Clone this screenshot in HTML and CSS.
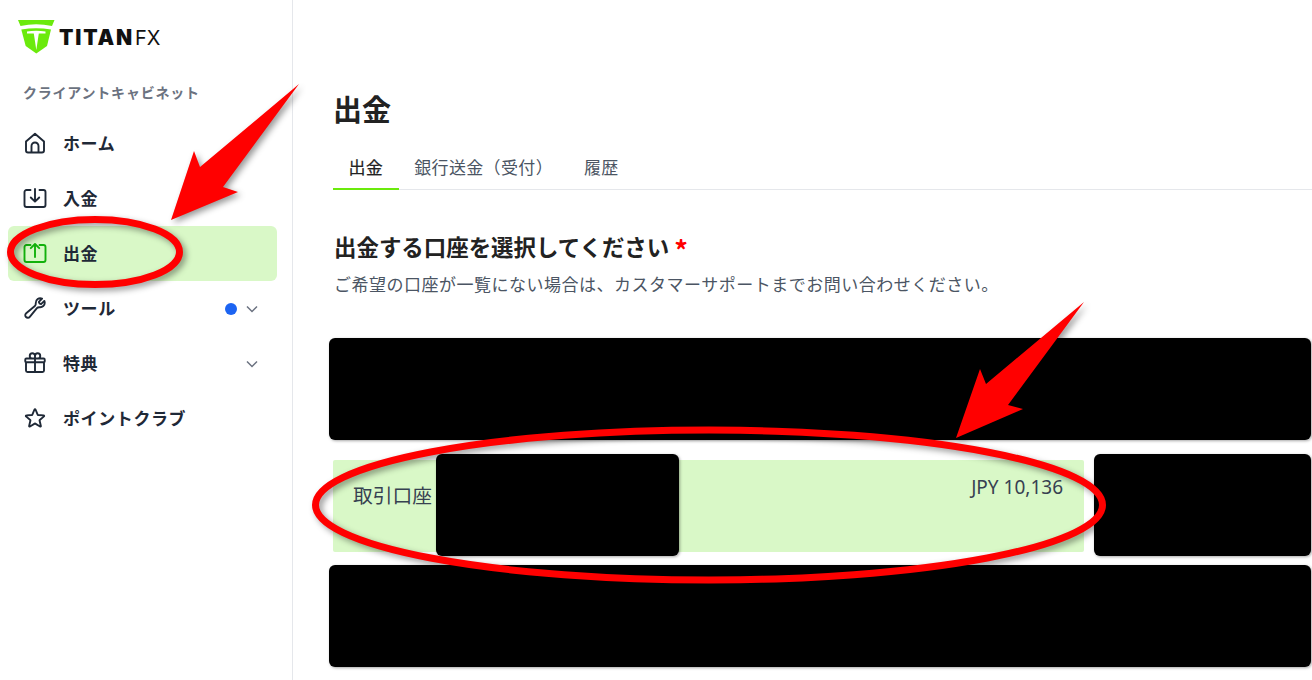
FILE: index.html
```html
<!DOCTYPE html>
<html lang="ja">
<head>
<meta charset="utf-8">
<title>出金</title>
<link rel="stylesheet" href="styles.css">
</head>
<body>
<div class="app">
  <aside class="sidebar">
    <div class="brand">
      <svg class="brand-mark" viewBox="0 0 37 34" width="37" height="34">
        <path d="M0 0H36.500L34 6Q18 2.500 2.500 6Z" fill="#6bea0c"/>
        <path d="M3.300 9.500Q18 6.800 33 9.500L29 26 18.300 33.500 7.700 26Z" fill="#6bea0c"/>
        <path d="M9 11.400Q18 10 27.500 11.400V13.600H20.800L18.300 30 15.800 13.600H9Z" fill="#fff"/>
      </svg>
      <span class="brand-name">TITAN</span><span class="brand-fx">FX</span>
    </div>
    <div class="side-heading">クライアントキャビネット</div>
    <nav class="nav">
      <a class="nav-item">
        <svg class="icon" viewBox="0 0 24 24"><path d="M3 10.500 12 2.800l9 7.700V19.500a2 2 0 0 1-2 2H5a2 2 0 0 1-2-2zM8.500 21.500V15a3.500 3.500 0 0 1 7 0v6.500"/></svg>
        <span class="nav-label">ホーム</span>
      </a>
      <a class="nav-item">
        <svg class="icon" viewBox="0 0 24 24"><path d="M7.500 4H3.500A2 2 0 0 0 1.500 6v13a2 2 0 0 0 2 2h17a2 2 0 0 0 2-2V6a2 2 0 0 0-2-2h-4M12 3v12.500M7.800 11.500l4.200 4.200 4.200-4.200"/></svg>
        <span class="nav-label">入金</span>
      </a>
      <a class="nav-item active">
        <svg class="icon" viewBox="0 0 24 24"><path d="M7.500 4H3.500A2 2 0 0 0 1.500 6v13a2 2 0 0 0 2 2h17a2 2 0 0 0 2-2V6a2 2 0 0 0-2-2h-4M12 16V3M7.800 7.200 12 3l4.200 4.200"/></svg>
        <span class="nav-label">出金</span>
      </a>
      <a class="nav-item">
        <svg class="icon" viewBox="0 0 24 24"><path d="M21.750 6.750a4.500 4.500 0 0 1-4.884 4.484c-1.076-.091-2.264.071-2.950.904l-7.152 8.684a2.548 2.548 0 1 1-3.586-3.586l8.684-7.152c.833-.686.995-1.874.904-2.950a4.500 4.500 0 0 1 6.336-4.486l-3.276 3.276a3.004 3.004 0 0 0 2.250 2.250l3.276-3.276c.287.626.402 1.313.402 2.052Z"/></svg>
        <span class="nav-label">ツール</span>
        <span class="dot"></span>
        <svg class="chevron" viewBox="0 0 12 8"><path d="M1 1.500 6 6.500 11 1.500"/></svg>
      </a>
      <a class="nav-item">
        <svg class="icon" viewBox="0 0 24 24"><path d="M21 11.250v8.250a1.500 1.500 0 0 1-1.500 1.500H4.500A1.500 1.500 0 0 1 3 19.500v-8.250M12 4.875A2.625 2.625 0 1 0 9.375 7.500H12m0-2.625V7.500m0-2.625A2.625 2.625 0 1 1 14.625 7.500H12m0 0V21m-8.625-9.750h17.250c.621 0 1.125-.504 1.125-1.125v-1.500c0-.621-.504-1.125-1.125-1.125H3.375c-.621 0-1.125.504-1.125 1.125v1.500c0 .621.504 1.125 1.125 1.125Z"/></svg>
        <span class="nav-label">特典</span>
        <svg class="chevron only" viewBox="0 0 12 8"><path d="M1 1.500 6 6.500 11 1.500"/></svg>
      </a>
      <a class="nav-item">
        <svg class="icon" viewBox="0 0 24 24"><path d="M11.480 3.499a.562.562 0 0 1 1.040 0l2.125 5.111a.563.563 0 0 0 .475.345l5.518.442c.499.040.701.663.321 1.003l-4.204 3.602a.563.563 0 0 0-.182.557l1.285 5.385a.562.562 0 0 1-.840.610l-4.725-2.885a.562.562 0 0 0-.586 0L6.982 20.540a.562.562 0 0 1-.840-.610l1.285-5.386a.562.562 0 0 0-.182-.557l-4.204-3.602a.563.563 0 0 1 .321-1.003l5.518-.442a.563.563 0 0 0 .475-.345L11.480 3.500Z"/></svg>
        <span class="nav-label">ポイントクラブ</span>
      </a>
    </nav>
  </aside>
  <main class="main">
    <h1 class="title">出金</h1>
    <div class="tabs">
      <a class="tab active">出金</a>
      <a class="tab">銀行送金（受付）</a>
      <a class="tab">履歴</a>
    </div>
    <h2 class="section-title">出金する口座を選択してください <span class="req">*</span></h2>
    <p class="section-note">ご希望の口座が一覧にない場合は、カスタマーサポートまでお問い合わせください。</p>
    <div class="accounts">
      <div class="redact wide"></div>
      <div class="account-line">
        <div class="account">
          <span class="account-type">取引口座</span>
          <div class="redact number"></div>
          <span class="balance">JPY 10,136</span>
        </div>
        <div class="redact side"></div>
      </div>
      <div class="redact wide"></div>
    </div>
  </main>
</div>
<svg class="annotations" viewBox="0 0 1312 680" width="1312" height="680">
  <g class="marks">
    <ellipse cx="95" cy="252" rx="84.500" ry="32.500"/>
    <ellipse cx="709" cy="505" rx="393.500" ry="75"/>
    <polygon class="arrow" points="299,84 223,187 238,192 171,220 194,151 200,167"/>
    <polygon class="arrow" points="1084,302 1008,405 1023,409 956,438 980,369 986,384"/>
  </g>
</svg>
</body>
</html>
```
FILE: styles.css
```css
* { box-sizing: border-box; }
html, body { margin: 0; height: 100%; overflow: hidden; background: #fff; }
body { font-family: "Noto Sans CJK JP", "Noto Sans", sans-serif; color: #1f2937; }

.app { display: flex; height: 680px; }

.sidebar {
  flex: 0 0 293px;
  border-right: 1px solid #e5e7eb;
  padding: 20px 15px 0 8px;
}
.brand { display: flex; align-items: center; height: 34px; padding-left: 10px; color: #111; }
.brand-mark { flex: none; margin-right: 4px; }
.brand-name { font-family: Inter, sans-serif; font-weight: 900; font-size: 21px; letter-spacing: 1.800px; padding-top: 1px; }
.brand-fx { font-family: Inter, sans-serif; font-weight: 400; font-size: 20px; margin-left: 1px; padding-top: 1px; }

.side-heading {
  margin: 27px 0 0 15px;
  height: 22px;
  line-height: 22px;
  font-size: 14px;
  font-weight: 700;
  letter-spacing: 0.78px;
  color: #6b7280;
}

.nav { display: flex; flex-direction: column; margin-top: 13px; }
.nav-item {
  display: flex;
  align-items: center;
  height: 55px;
  padding: 0 18px 0 15px;
  border-radius: 6px;
  font-size: 17px;
  font-weight: 700;
  letter-spacing: 0.600px;
}
.nav-label { margin-left: 16px; padding-bottom: 3px; }
.nav-item.active { background: #d9f8c7; }
.icon {
  flex: none;
  width: 24px;
  height: 24px;
  margin-bottom: 2px;
  fill: none;
  stroke: #1f2937;
  stroke-width: 1.9;
  stroke-linecap: round;
  stroke-linejoin: round;
}
.nav-item.active .icon { stroke: #12b10c; }
.dot { width: 12px; height: 12px; border-radius: 50%; background: #1c64f2; margin-left: auto; }
.chevron {
  flex: none;
  width: 12px;
  height: 8px;
  margin-left: 9px;
  margin-right: 1px;
  fill: none;
  stroke: #6b7280;
  stroke-width: 1.5;
}
.chevron.only { margin-left: auto; }

.main { flex: 1; min-width: 0; padding: 88px 1px 0 40px; }
.title { margin: 0; font-size: 29px; line-height: 40px; font-weight: 700; color: #222; }

.tabs { display: flex; margin: 20px -1px 0 0; border-bottom: 1px solid #e5e7eb; height: 42px; }
.tab {
  padding: 7px 15.500px 0;
  height: 42px;
  line-height: 24px;
  font-size: 17px;
  letter-spacing: 0.350px;
  color: #4b5563;
  white-space: nowrap;
}
.tab.active { color: #222; border-bottom: 2px solid #6bea0c; -webkit-text-stroke: 0.2px #222; }

.section-title { margin: 40px 0 0 1px; font-size: 22.450px; line-height: 32px; font-weight: 700; color: #222; }
.req { color: #f00; font-size: 27px; line-height: 0; vertical-align: -5px; }
.section-note { margin: 10px 0 0 1px; font-size: 17px; letter-spacing: 0.500px; line-height: 24px; color: #4b5563; }

.accounts { display: flex; flex-direction: column; margin: 42px 0 0 -4px; }
.redact { background: #000; border-radius: 6px; box-shadow: 1px 1px 3px rgba(0, 0, 0, .35); height: 102px; flex: none; }
.account-line { display: flex; align-items: flex-start; gap: 10px; margin: 14px 0 9px 4px; height: 102px; }
.account {
  flex: 0 0 751px;
  height: 92px;
  margin-top: 6px;
  display: flex;
  align-items: flex-start;
  background: #d9f8c7;
  border-radius: 2px;
  padding-left: 20px;
  padding-right: 21px;
}
.account-type { font-size: 19.750px; line-height: 30px; margin-top: 20px; white-space: nowrap; color: #374151; }
.redact.number { width: 243px; margin: -6px 0 0 4px; }
.redact.side { flex: 0 0 217px; }
.balance { margin-left: auto; margin-top: 14px; font-family: "Noto Sans", sans-serif; font-size: 19px; line-height: 26px; color: #374151; white-space: nowrap; }

.annotations { position: absolute; left: 0; top: 0; pointer-events: none; }
.marks { filter: drop-shadow(3px 3px 3px rgba(0, 0, 0, .4)); }
.marks ellipse { fill: none; stroke: #f00; stroke-width: 7; }
.marks .arrow { fill: #f00; }
```
